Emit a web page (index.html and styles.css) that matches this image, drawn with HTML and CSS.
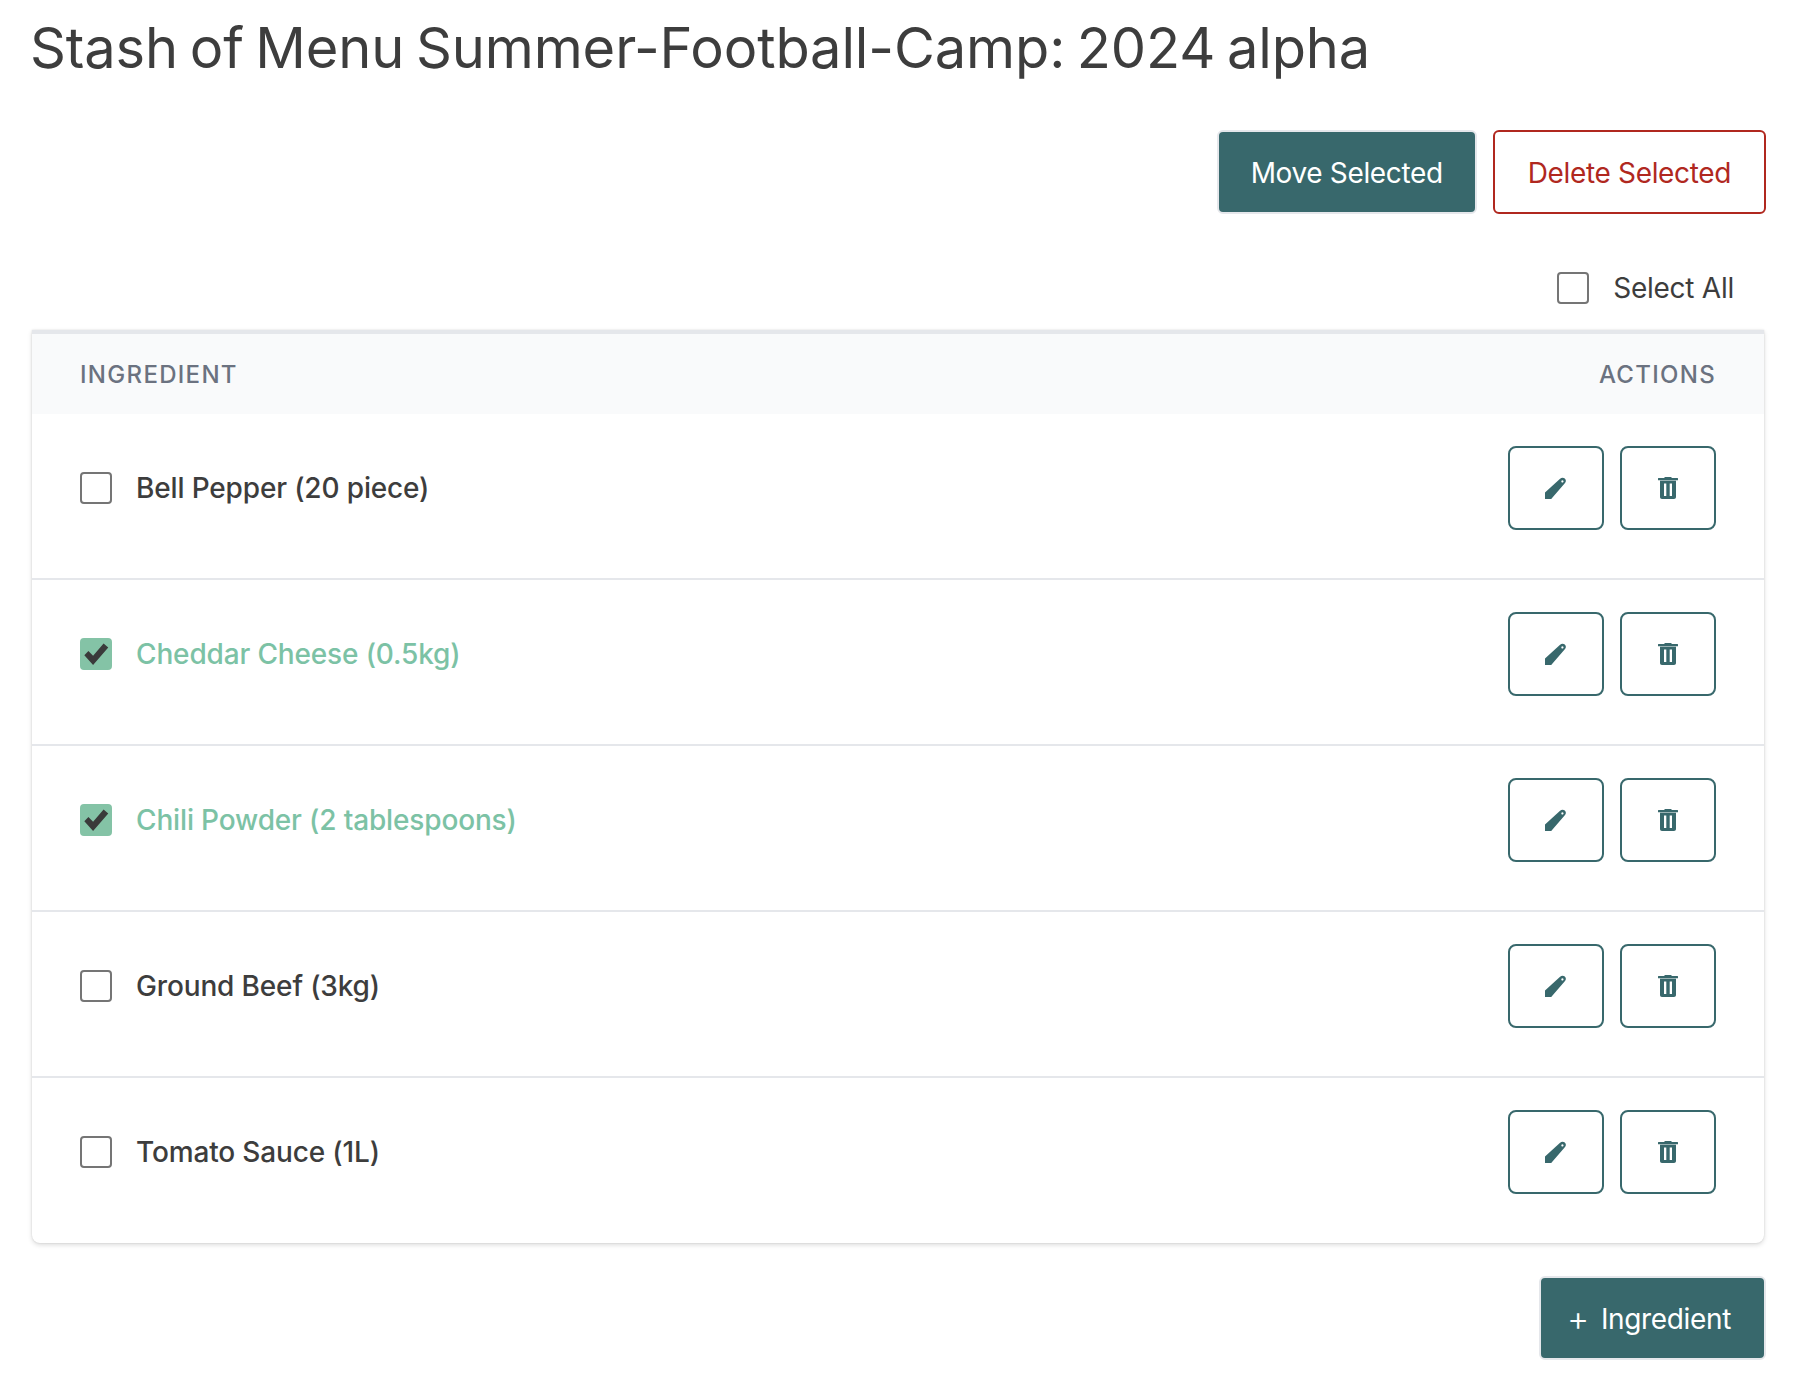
FILE: index.html
```html
<!DOCTYPE html>
<html>
<head>
    <title>Stash of Menu Summer-Football-Camp: 2024 alpha</title>
    <link rel="stylesheet" href="styles.css">
</head>
<body>

<svg class="sprite" width="0" height="0">
    <symbol id="pencil" viewBox="0 0 22 22">
        <path fill-rule="evenodd" d="M0 15.500 14.800 2c1.700-1.600 3.500-1.800 5-.4 1.600 1.500 1.400 3.400-.2 5L6.200 22H0zM17.400 3.300a1.100 1.100 0 1 0 .01 0z"/>
    </symbol>
    <symbol id="trash" viewBox="0 0 20 22">
        <path fill-rule="evenodd" d="M7 0h6l1 1h5.500c.4 0 .5.2.5.5V3.300H0V1.500c0-.3.1-.5.5-.5H6zM2 3.800h16V20c0 1.200-.8 2-2 2H4c-1.200 0-2-.8-2-2zM6 6.500V19h2.300V6.500zM11.700 6.500V19H14V6.500z"/>
    </symbol>
    <symbol id="check" viewBox="0 0 24 24">
        <path d="M2 13 5.500 9.500 9.500 13.500 18.500 3 22.500 6.500 9.500 21.500z"/>
    </symbol>
</svg>

<div class="page">
    <h1 class="title">Stash of Menu Summer-Football-Camp: 2024 alpha</h1>

    <div class="toolbar">
        <button class="btn btn-solid">Move Selected</button>
        <button class="btn btn-danger">Delete Selected</button>
    </div>

    <label class="select-all">
        <span class="box"></span>
        <span>Select All</span>
    </label>

    <div class="card">
        <div class="card-head">
            <span>Ingredient</span>
            <span>Actions</span>
        </div>

        <div class="row">
            <label class="item"><span class="box"></span><span>Bell Pepper (20 piece)</span></label>
            <div class="actions">
                <button class="icon-btn"><svg class="icon"><use href="#pencil"/></svg></button>
                <button class="icon-btn"><svg class="icon icon-trash"><use href="#trash"/></svg></button>
            </div>
        </div>

        <div class="row">
            <label class="item item-checked"><span class="box box-checked"><svg class="check"><use href="#check"/></svg></span><span>Cheddar Cheese (0.5kg)</span></label>
            <div class="actions">
                <button class="icon-btn"><svg class="icon"><use href="#pencil"/></svg></button>
                <button class="icon-btn"><svg class="icon icon-trash"><use href="#trash"/></svg></button>
            </div>
        </div>

        <div class="row">
            <label class="item item-checked"><span class="box box-checked"><svg class="check"><use href="#check"/></svg></span><span>Chili Powder (2 tablespoons)</span></label>
            <div class="actions">
                <button class="icon-btn"><svg class="icon"><use href="#pencil"/></svg></button>
                <button class="icon-btn"><svg class="icon icon-trash"><use href="#trash"/></svg></button>
            </div>
        </div>

        <div class="row">
            <label class="item"><span class="box"></span><span>Ground Beef (3kg)</span></label>
            <div class="actions">
                <button class="icon-btn"><svg class="icon"><use href="#pencil"/></svg></button>
                <button class="icon-btn"><svg class="icon icon-trash"><use href="#trash"/></svg></button>
            </div>
        </div>

        <div class="row">
            <label class="item"><span class="box"></span><span>Tomato Sauce (1L)</span></label>
            <div class="actions">
                <button class="icon-btn"><svg class="icon"><use href="#pencil"/></svg></button>
                <button class="icon-btn"><svg class="icon icon-trash"><use href="#trash"/></svg></button>
            </div>
        </div>
    </div>

    <div class="footer">
        <button class="btn btn-solid btn-add"><span class="plus">+</span><span class="add-label">Ingredient</span></button>
    </div>
</div>

</body>
</html>
```

FILE: styles.css
```css
body { margin: 0; background-color: #fff; color: #3d3d3d; font-family: Inter, "Liberation Sans", sans-serif; }
.sprite { position: absolute; }
.page { padding: 0 49px 0 31px; }

.title { margin: 0 0 0 -1px; padding-top: 14px; height: 130px; box-sizing: border-box; font-size: 56px; line-height: 68px; font-weight: 400; letter-spacing: -0.12px; word-spacing: -4px; }

.toolbar { display: flex; justify-content: flex-end; gap: 16px; }
.btn { height: 84px; padding: 2px 32px 0; border-radius: 6px; font-family: inherit; font-size: 28px; font-weight: 400; letter-spacing: -0.35px; }
.btn-solid { background-color: #38686c; color: #fff; border: 2px solid #e5e7eb; }
.btn-danger { padding: 2px 33px 0; background-color: #fff; color: #b0281f; border: 2px solid #b0281f; }

.select-all { display: flex; justify-content: flex-end; align-items: center; gap: 24px; height: 76px; margin-top: 36px; padding-right: 32px; font-size: 28px; letter-spacing: -0.25px; }

.box { display: flex; align-items: center; justify-content: center; flex-shrink: 0; width: 32px; height: 32px; box-sizing: border-box; border: 2px solid #757575; border-radius: 4px; background-color: #fff; }
.box-checked { background-color: #84c3a6; border-color: #84c3a6; }
.check { width: 30px; height: 30px; fill: #3a3a3a; }

.card { margin: 4px 2px 0 1px; border-top: 4px solid #e5e7eb; border-radius: 0 0 8px 8px; box-shadow: 0 2px 5px rgba(0,0,0,0.14), 0 0 2px rgba(0,0,0,0.12); background-color: #fff; }
.card-head { display: flex; justify-content: space-between; align-items: center; height: 80px; padding: 0 48px; background-color: #f9fafb; color: #6b7280; font-size: 24px; font-weight: 500; letter-spacing: 1.3px; text-transform: uppercase; }

.row { display: flex; justify-content: space-between; align-items: center; height: 166px; box-sizing: border-box; padding: 0 48px 16px; border-bottom: 2px solid #e5e7eb; }
.row:last-child { height: 165px; border-bottom-color: transparent; }
.item { display: flex; align-items: center; gap: 24px; font-size: 28px; font-weight: 500; letter-spacing: -0.15px; }
.item-checked { color: #7cc2a5; }

.actions { display: flex; gap: 16px; }
.icon-btn { display: flex; align-items: center; justify-content: center; width: 96px; height: 84px; padding: 0; border: 2px solid #38686c; border-radius: 8px; background-color: #fff; }
.icon { width: 22px; height: 22px; fill: #38686c; }
.icon-trash { width: 20px; }

.footer { display: flex; justify-content: flex-end; margin-top: 33px; }
.btn-add { padding: 2px 33px 0 26px; }
.plus { margin-right: 12px; font-size: 34px; line-height: 28px; font-weight: 300; vertical-align: -2px; }
```
